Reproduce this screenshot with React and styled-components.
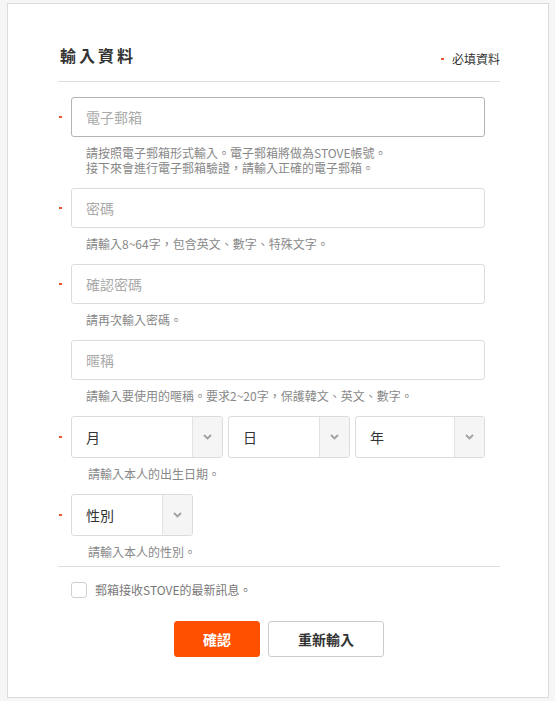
import React from "react";
import styled, { createGlobalStyle } from "styled-components";

const Global = createGlobalStyle`
  html, body { margin: 0; padding: 0; background: #f6f6f6; }
  body { font-family: "Noto Sans CJK TC", "Noto Sans", sans-serif; }
  * { box-sizing: border-box; }
`;

const Panel = styled.div`
  margin: 3px 6px 3px 7px;
  min-height: calc(100vh - 6px);
  background: #fff;
  border: 1px solid #dcdcdc;
  padding: 0 48px 0 50px;
`;

const Header = styled.div`
  display: flex;
  justify-content: space-between;
  align-items: flex-end;
  padding: 41px 0 16px 2px;
  border-bottom: 1px solid #dedede;
`;

const Title = styled.h1`
  margin: 0;
  font-size: 16px;
  line-height: 20px;
  font-weight: 700;
  letter-spacing: 3px;
  color: #333;
`;

const RequiredNote = styled.div`
  display: flex;
  align-items: center;
  gap: 8px;
  font-size: 12px;
  line-height: 12px;
  color: #333;
`;

const Dot = styled.span`
  display: inline-block;
  width: 3px;
  height: 2px;
  background: #e8552e;
`;

const Form = styled.div`
  display: flex;
  flex-direction: column;
  padding-top: 15px;
`;

const Field = styled.div`
  display: grid;
  grid-template-columns: 13px 414px;
  margin-top: ${(p) => (p.$first ? 0 : 13)}px;
`;

const Marker = styled.span`
  grid-column: 1;
  grid-row: 1;
  align-self: center;
  width: 3px;
  height: 2px;
  margin-left: 1px;
  background: ${(p) => (p.$show ? "#e8552e" : "transparent")};
`;

const Control = styled.div`
  grid-column: 2;
  grid-row: 1;
  display: flex;
  gap: 5px;
`;

const TextInput = styled.input`
  width: 100%;
  height: 40px;
  border: 1px solid ${(p) => (p.$focus ? "#b4b4b4" : "#dcdcdc")};
  border-radius: 3px;
  padding: 0 14px;
  font-family: inherit;
  font-size: 14px;
  color: #333;
  outline: none;
  caret-color: #222;
  &::placeholder { color: #aaa; }
`;

const Help = styled.div`
  grid-column: 2;
  grid-row: 2;
  margin-top: 8px;
  padding-left: ${(p) => p.$indent}px;
  font-size: 12px;
  line-height: 15px;
  color: #888;
`;

const Select = styled.div`
  display: flex;
  width: ${(p) => p.$w}px;
  height: 42px;
  border: 1px solid #dcdcdc;
  border-radius: 3px;
  overflow: hidden;
  background: #fff;
`;

const SelectValue = styled.div`
  flex: 1;
  display: flex;
  align-items: center;
  padding-left: 14px;
  font-size: 14px;
  color: #333;
`;

const ArrowBox = styled.div`
  width: 30px;
  display: flex;
  align-items: center;
  justify-content: center;
  background: #f5f5f5;
  border-left: 1px solid #e2e2e2;
`;

const Divider = styled.div`
  height: 1px;
  background: #dedede;
  margin-top: 7px;
`;

const CheckRow = styled.label`
  display: flex;
  align-items: center;
  gap: 8px;
  margin: 14px 0 0 13px;
  font-size: 12px;
  color: #777;
`;

const Box = styled.span`
  width: 16px;
  height: 16px;
  border: 1px solid #cfcfcf;
  border-radius: 3px;
  background: #fff;
`;

const Buttons = styled.div`
  display: flex;
  justify-content: center;
  gap: 8px;
  margin-top: 23px;
`;

const Button = styled.button`
  width: ${(p) => p.$w}px;
  height: 36px;
  border-radius: 3px;
  font-family: inherit;
  font-size: 14px;
  font-weight: 700;
  cursor: pointer;
  border: 1px solid ${(p) => (p.$primary ? "#ff5000" : "#cccccc")};
  background: ${(p) => (p.$primary ? "#ff5000" : "#fff")};
  color: ${(p) => (p.$primary ? "#fff" : "#333")};
`;

const Chevron = () => (
  <svg width="9" height="6" viewBox="0 0 9 6" fill="none">
    <path d="M1 1l3.5 3.5L8 1" stroke="#a0a0a0" strokeWidth="1.8" />
  </svg>
);

const Dropdown = ({ w, label }) => (
  <Select $w={w}>
    <SelectValue>{label}</SelectValue>
    <ArrowBox>
      <Chevron />
    </ArrowBox>
  </Select>
);

const InputField = ({ first, required, placeholder, focus, help }) => (
  <Field $first={first}>
    <Marker $show={required} />
    <Control>
      <TextInput placeholder={placeholder} $focus={focus} autoFocus={focus} />
    </Control>
    <Help $indent={15}>
      {help.map((h, i) => (
        <div key={i}>{h}</div>
      ))}
    </Help>
  </Field>
);

export default function App() {
  return (
    <>
      <Global />
      <Panel>
        <Header>
          <Title>輸入資料</Title>
          <RequiredNote>
            <Dot />
            必填資料
          </RequiredNote>
        </Header>
        <Form>
          <InputField
            first
            required
            focus
            placeholder="電子郵箱"
            help={[
              "請按照電子郵箱形式輸入。電子郵箱將做為STOVE帳號。",
              "接下來會進行電子郵箱驗證，請輸入正確的電子郵箱。",
            ]}
          />
          <InputField
            required
            placeholder="密碼"
            help={["請輸入8~64字，包含英文、數字、特殊文字。"]}
          />
          <InputField required placeholder="確認密碼" help={["請再次輸入密碼。"]} />
          <InputField
            placeholder="暱稱"
            help={["請輸入要使用的暱稱。要求2~20字，保護韓文、英文、數字。"]}
          />
          <Field>
            <Marker $show />
            <Control>
              <Dropdown w={152} label="月" />
              <Dropdown w={122} label="日" />
              <Dropdown w={130} label="年" />
            </Control>
            <Help $indent={17}>請輸入本人的出生日期。</Help>
          </Field>
          <Field>
            <Marker $show />
            <Control>
              <Dropdown w={122} label="性別" />
            </Control>
            <Help $indent={17}>請輸入本人的性別。</Help>
          </Field>
        </Form>
        <Divider />
        <CheckRow>
          <Box />
          郵箱接收STOVE的最新訊息。
        </CheckRow>
        <Buttons>
          <Button $primary $w={86}>確認</Button>
          <Button $w={116}>重新輸入</Button>
        </Buttons>
      </Panel>
    </>
  );
}
